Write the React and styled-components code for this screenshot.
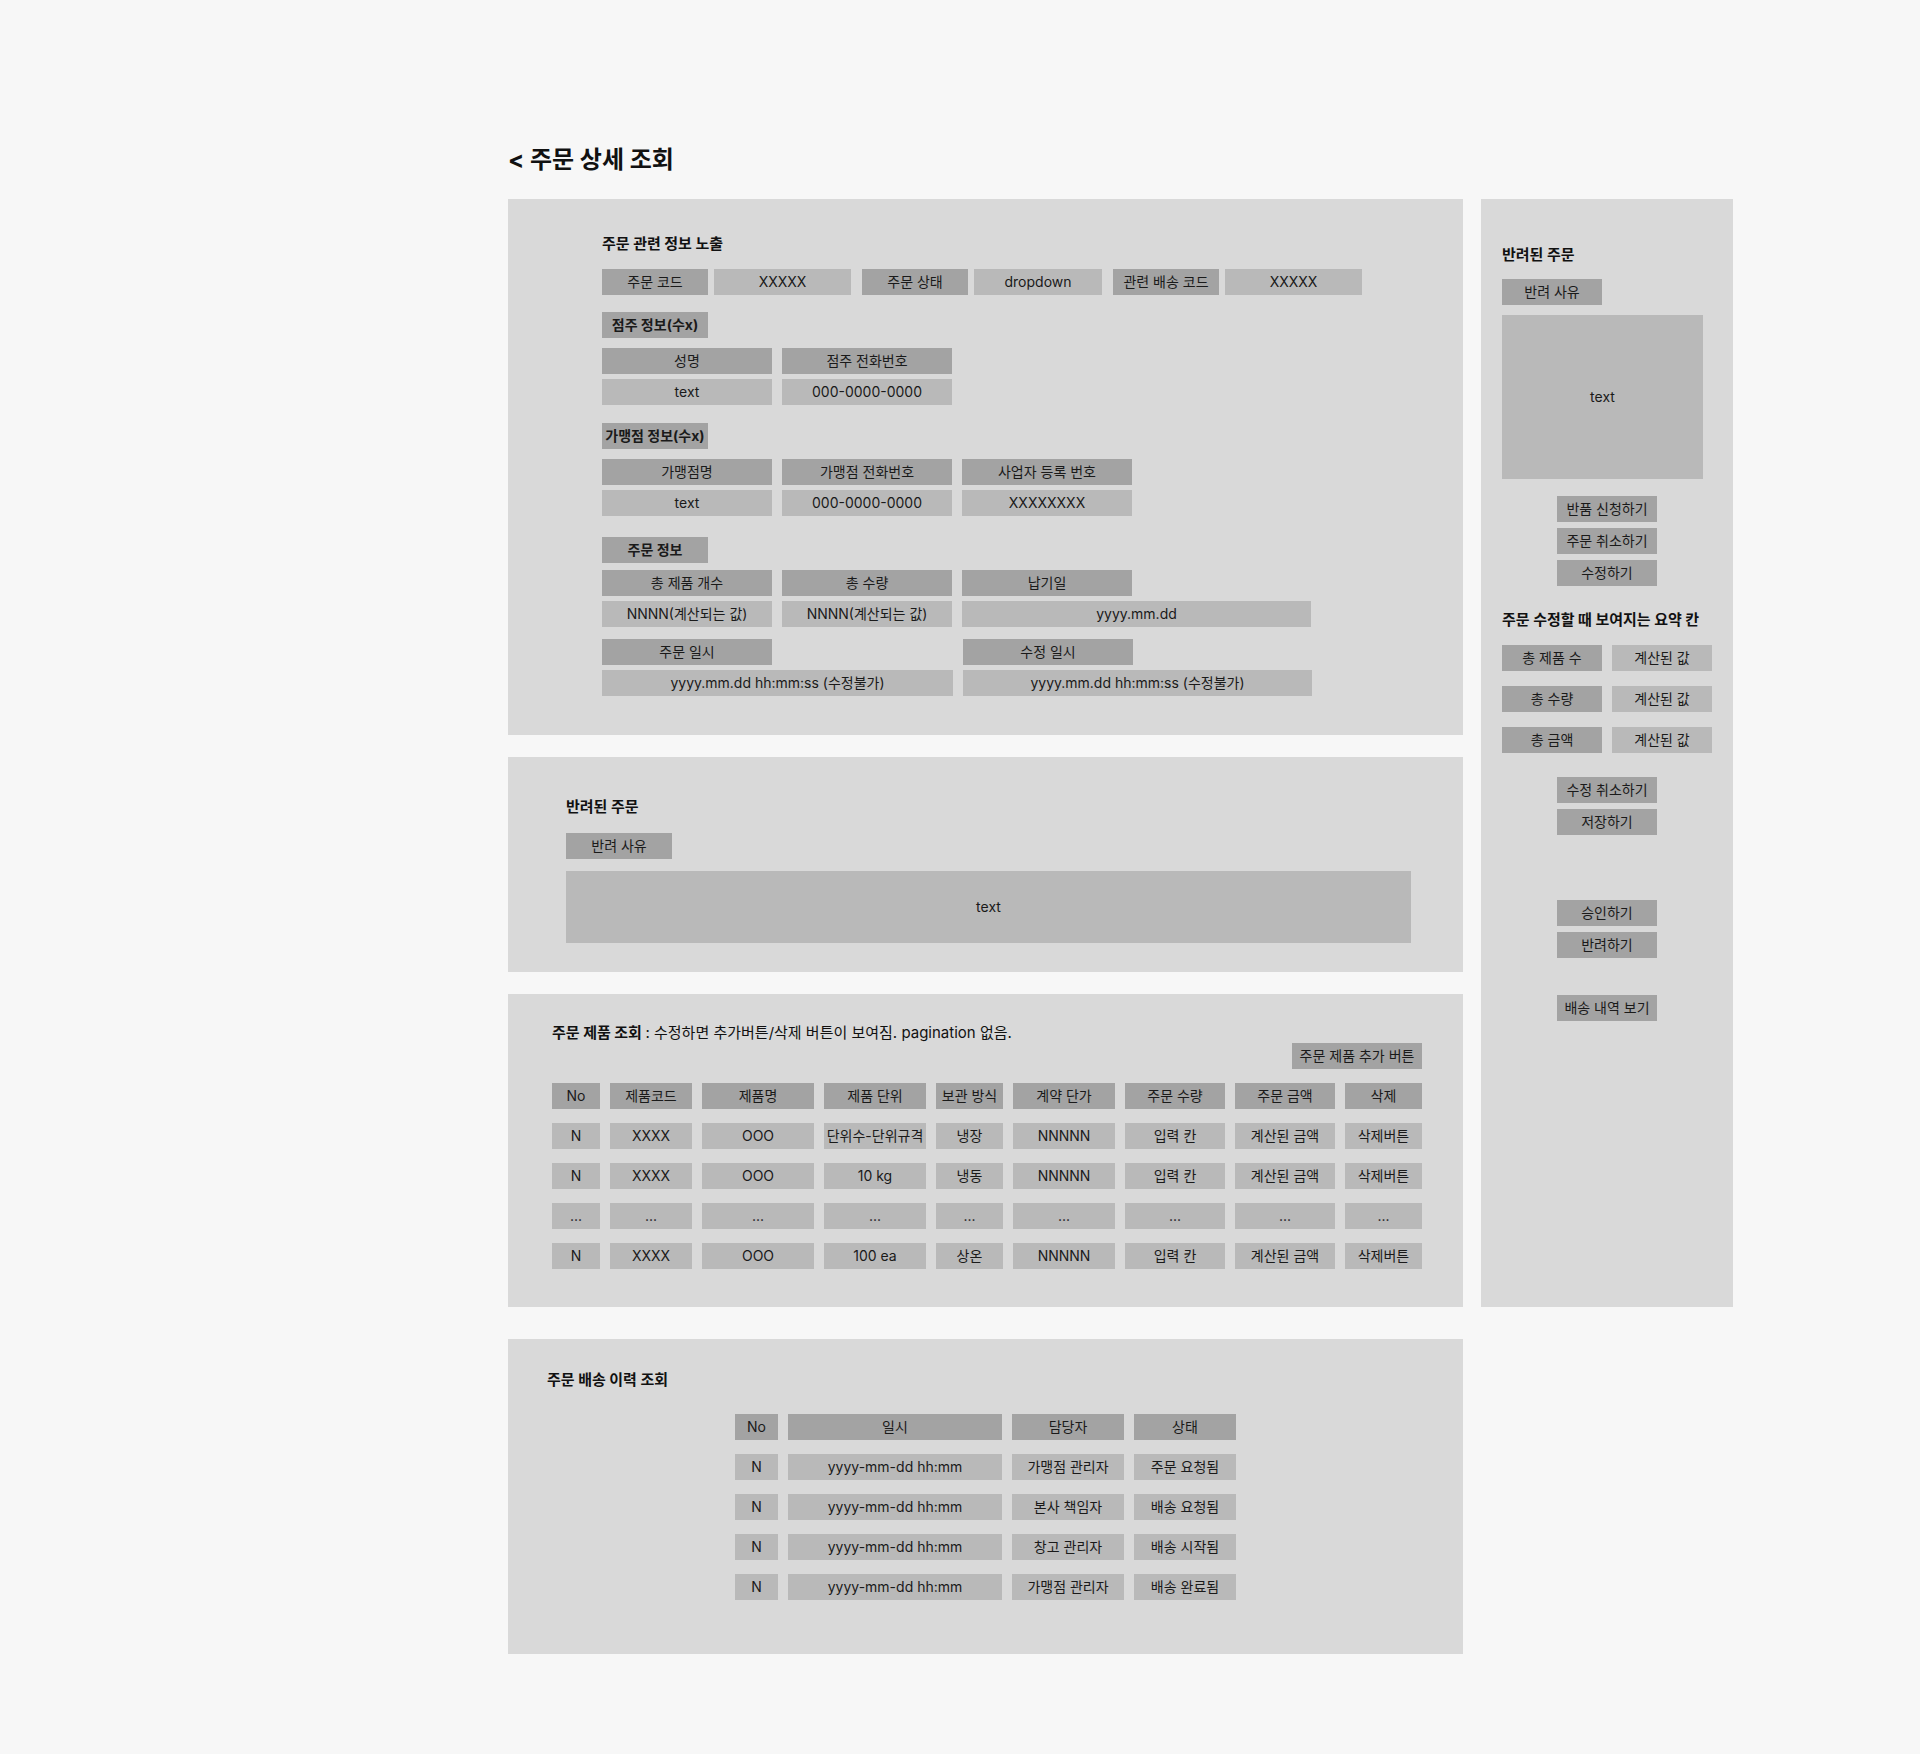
import React from "react"
import styled, { createGlobalStyle } from "styled-components"

const GlobalStyle = createGlobalStyle`
body{
  margin:0;
  background:#f7f7f7;
  font-family:Inter, "Noto Sans CJK KR", sans-serif;
  color:#1a1a1a;
}
`

const Page = styled.div`
box-sizing:border-box;
min-height:1754px;
padding:145px 0 80px 508px;
`

const PageTitle = styled.h1`
margin:0 0 25px;
font-size:24px;
line-height:29px;
font-weight:700;
color:#111;
`

const Layout = styled.div`
display:flex;
gap:18px;
align-items:stretch;
`

const LeftStack = styled.div`
display:flex;
flex-direction:column;
gap:22px;
width:955px;
`

const Panel = styled.section`
box-sizing:border-box;
background:#d9d9d9;
display:flex;
flex-direction:column;
`

const InfoPanel = styled(Panel)`
padding:35px 0 39px 94px;
`

const RejectPanel = styled(Panel)`
padding:40px 52px 29px 58px;
`

const ProductPanel = styled(Panel)`
padding:29px 0 38px 44px;
`

const HistoryPanel = styled(Panel)`
width:955px;
margin-top:32px;
padding:31px 0 54px 39px;
`

const SidePanel = styled(Panel)`
width:252px;
padding:46px 21px 0 21px;
`

const SectionTitle = styled.h2`
margin:${({ $mt }) => $mt || 0}px 0 0;
font-size:15px;
line-height:20px;
font-weight:700;
white-space:nowrap;
color:#111;
`

const Note = styled.span`
font-weight:400;
`

const Row = styled.div`
display:flex;
gap:${({ $gap }) => $gap ?? 10}px;
margin-top:${({ $mt }) => $mt || 0}px;
`

const Pair = styled.div`
display:flex;
gap:6px;
`

const Cell = styled.div`
box-sizing:border-box;
flex:none;
width:${({ $w }) => $w}px;
height:${({ $h }) => $h || 26}px;
display:flex;
align-items:center;
justify-content:center;
background:${({ $tone }) => ($tone === "label" ? "#a3a3a3" : "#b9b9b9")};
font-size:14px;
line-height:18px;
font-weight:${({ $bold }) => ($bold ? 700 : 400)};
white-space:nowrap;
overflow:hidden;
margin-top:${({ $mt }) => $mt || 0}px;
`

const TwoCol = styled.div`
display:grid;
grid-template-columns:351px 349px;
column-gap:10px;
row-gap:5px;
margin-top:${({ $mt }) => $mt || 0}px;
`

const Grid = styled.div`
display:grid;
grid-template-columns:${({ $cols }) => $cols.map((c) => c + "px").join(" ")};
column-gap:10px;
row-gap:14px;
margin-top:${({ $mt }) => $mt || 0}px;
`

const ProductBody = styled.div`
width:870px;
display:flex;
flex-direction:column;
`

const Toolbar = styled.div`
display:flex;
justify-content:flex-end;
`

const CenterTable = styled.div`
align-self:center;
margin-left:-39px;
`

const ActionStack = styled.div`
display:flex;
flex-direction:column;
align-items:center;
gap:6px;
margin-top:${({ $mt }) => $mt || 0}px;
`

const ActionButton = styled.button`
box-sizing:border-box;
display:flex;
align-items:center;
justify-content:center;
width:100px;
height:26px;
border:none;
padding:0;
background:#a3a3a3;
font-family:inherit;
font-size:14px;
line-height:18px;
color:#1a1a1a;
white-space:nowrap;
cursor:pointer;
`

const productCols = [48, 82, 112, 102, 67, 102, 100, 100, 77]
const productHead = ["No", "제품코드", "제품명", "제품 단위", "보관 방식", "계약 단가", "주문 수량", "주문 금액", "삭제"]
const productRows = [
  ["N", "XXXX", "OOO", "단위수-단위규격", "냉장", "NNNNN", "입력 칸", "계산된 금액", "삭제버튼"],
  ["N", "XXXX", "OOO", "10 kg", "냉동", "NNNNN", "입력 칸", "계산된 금액", "삭제버튼"],
  ["...", "...", "...", "...", "...", "...", "...", "...", "..."],
  ["N", "XXXX", "OOO", "100 ea", "상온", "NNNNN", "입력 칸", "계산된 금액", "삭제버튼"],
]

const historyCols = [43, 214, 112, 102]
const historyHead = ["No", "일시", "담당자", "상태"]
const historyRows = [
  ["N", "yyyy-mm-dd hh:mm", "가맹점 관리자", "주문 요청됨"],
  ["N", "yyyy-mm-dd hh:mm", "본사 책임자", "배송 요청됨"],
  ["N", "yyyy-mm-dd hh:mm", "창고 관리자", "배송 시작됨"],
  ["N", "yyyy-mm-dd hh:mm", "가맹점 관리자", "배송 완료됨"],
]

function DataGrid({ cols, head, rows, mt }) {
  return (
    <Grid $cols={cols} $mt={mt}>
      {head.map((h, i) => (
        <Cell key={"h" + i} $tone="label" $w={cols[i]}>{h}</Cell>
      ))}
      {rows.map((r, ri) =>
        r.map((v, i) => (
          <Cell key={ri + "-" + i} $w={cols[i]}>{v}</Cell>
        ))
      )}
    </Grid>
  )
}

export default function App() {
  return (
    <>
      <GlobalStyle />
      <Page>
        <PageTitle>&lt; 주문 상세 조회</PageTitle>
        <Layout>
          <LeftStack>
            <InfoPanel>
              <SectionTitle>주문 관련 정보 노출</SectionTitle>
              <Row $gap={11} $mt={15}>
                <Pair>
                  <Cell $tone="label" $w={106}>주문 코드</Cell>
                  <Cell $w={137}>XXXXX</Cell>
                </Pair>
                <Pair>
                  <Cell $tone="label" $w={106}>주문 상태</Cell>
                  <Cell $w={128}>dropdown</Cell>
                </Pair>
                <Pair>
                  <Cell $tone="label" $w={106}>관련 배송 코드</Cell>
                  <Cell $w={137}>XXXXX</Cell>
                </Pair>
              </Row>

              <Cell $tone="label" $bold $w={106} $mt={17}>점주 정보(수x)</Cell>
              <Row $mt={10}>
                <Cell $tone="label" $w={170}>성명</Cell>
                <Cell $tone="label" $w={170}>점주 전화번호</Cell>
              </Row>
              <Row $mt={5}>
                <Cell $w={170}>text</Cell>
                <Cell $w={170}>000-0000-0000</Cell>
              </Row>

              <Cell $tone="label" $bold $w={106} $mt={18}>가맹점 정보(수x)</Cell>
              <Row $mt={10}>
                <Cell $tone="label" $w={170}>가맹점명</Cell>
                <Cell $tone="label" $w={170}>가맹점 전화번호</Cell>
                <Cell $tone="label" $w={170}>사업자 등록 번호</Cell>
              </Row>
              <Row $mt={5}>
                <Cell $w={170}>text</Cell>
                <Cell $w={170}>000-0000-0000</Cell>
                <Cell $w={170}>XXXXXXXX</Cell>
              </Row>

              <Cell $tone="label" $bold $w={106} $mt={21}>주문 정보</Cell>
              <Row $mt={7}>
                <Cell $tone="label" $w={170}>총 제품 개수</Cell>
                <Cell $tone="label" $w={170}>총 수량</Cell>
                <Cell $tone="label" $w={170}>납기일</Cell>
              </Row>
              <Row $mt={5}>
                <Cell $w={170}>NNNN(계산되는 값)</Cell>
                <Cell $w={170}>NNNN(계산되는 값)</Cell>
                <Cell $w={349}>yyyy.mm.dd</Cell>
              </Row>
              <TwoCol $mt={12}>
                <Cell $tone="label" $w={170}>주문 일시</Cell>
                <Cell $tone="label" $w={170}>수정 일시</Cell>
                <Cell $w={351}>yyyy.mm.dd hh:mm:ss (수정불가)</Cell>
                <Cell $w={349}>yyyy.mm.dd hh:mm:ss (수정불가)</Cell>
              </TwoCol>
            </InfoPanel>

            <RejectPanel>
              <SectionTitle>반려된 주문</SectionTitle>
              <Cell $tone="label" $w={106} $mt={16}>반려 사유</Cell>
              <Cell $w={845} $h={72} $mt={12}>text</Cell>
            </RejectPanel>

            <ProductPanel>
              <ProductBody>
                <SectionTitle>
                  주문 제품 조회 <Note>: 수정하면 추가버튼/삭제 버튼이 보여짐. pagination 없음.</Note>
                </SectionTitle>
                <Toolbar>
                  <Cell $tone="label" $w={130}>주문 제품 추가 버튼</Cell>
                </Toolbar>
                <DataGrid cols={productCols} head={productHead} rows={productRows} mt={14} />
              </ProductBody>
            </ProductPanel>
          </LeftStack>

          <SidePanel>
            <SectionTitle>반려된 주문</SectionTitle>
            <Cell $tone="label" $w={100} $mt={14}>반려 사유</Cell>
            <Cell $w={201} $h={164} $mt={10}>text</Cell>
            <ActionStack $mt={17}>
              <ActionButton>반품 신청하기</ActionButton>
              <ActionButton>주문 취소하기</ActionButton>
              <ActionButton>수정하기</ActionButton>
            </ActionStack>

            <SectionTitle $mt={24}>주문 수정할 때 보여지는 요약 칸</SectionTitle>
            <Row $mt={15}>
              <Cell $tone="label" $w={100}>총 제품 수</Cell>
              <Cell $w={100}>계산된 값</Cell>
            </Row>
            <Row $mt={15}>
              <Cell $tone="label" $w={100}>총 수량</Cell>
              <Cell $w={100}>계산된 값</Cell>
            </Row>
            <Row $mt={15}>
              <Cell $tone="label" $w={100}>총 금액</Cell>
              <Cell $w={100}>계산된 값</Cell>
            </Row>

            <ActionStack $mt={24}>
              <ActionButton>수정 취소하기</ActionButton>
              <ActionButton>저장하기</ActionButton>
            </ActionStack>
            <ActionStack $mt={65}>
              <ActionButton>승인하기</ActionButton>
              <ActionButton>반려하기</ActionButton>
            </ActionStack>
            <ActionStack $mt={37}>
              <ActionButton>배송 내역 보기</ActionButton>
            </ActionStack>
          </SidePanel>
        </Layout>

        <HistoryPanel>
          <SectionTitle>주문 배송 이력 조회</SectionTitle>
          <CenterTable>
            <DataGrid cols={historyCols} head={historyHead} rows={historyRows} mt={24} />
          </CenterTable>
        </HistoryPanel>
      </Page>
    </>
  )
}
